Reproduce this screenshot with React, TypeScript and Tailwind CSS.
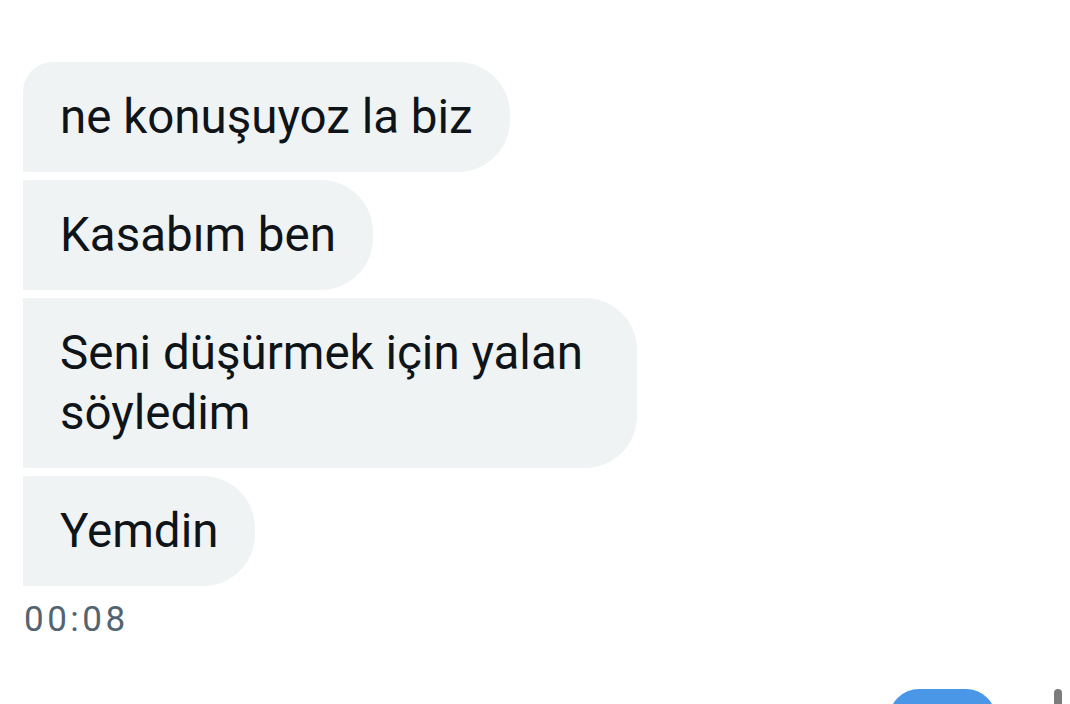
const messages = [
  { id: 1, text: 'ne konuşuyoz la biz', first: true },
  { id: 2, text: 'Kasabım ben', first: false },
  { id: 3, text: 'Seni düşürmek için yalan söyledim', first: false },
  { id: 4, text: 'Yemdin', first: false },
];

function Bubble({ text, first }: { text: string; first: boolean }) {
  return (
    <div
      className={
        'max-w-[614px] rounded-r-[52px] bg-[#eff3f4] px-[37px] py-[25px] text-[47.5px] leading-[60px] text-[#0f1419] ' +
        (first ? 'rounded-tl-[30px]' : '')
      }
    >
      {text}
    </div>
  );
}

export default function App() {
  return (
    <div
      className="h-[704px] w-[1070px] overflow-hidden bg-white"
      style={{ fontFamily: 'Roboto, "Liberation Sans", Arial, sans-serif' }}
    >
      <div className="flex flex-col items-start gap-2 pl-[23px] pt-[62px]">
        {messages.map((m) => (
          <Bubble key={m.id} text={m.text} first={m.first} />
        ))}
      </div>

      <p className="mt-[14px] pl-[24px] text-[35px] leading-[40px] tracking-[0.1em] text-[#536471]">
        00:08
      </p>

      <div className="mt-[49px] flex items-start justify-end">
        <div className="h-[60px] w-[107px] rounded-[30px] bg-[#4a97e8]" />
        <div className="ml-[58px] mr-[8px] h-[40px] w-[8px] rounded-full bg-[#7c7c7c]" />
      </div>
    </div>
  );
}
